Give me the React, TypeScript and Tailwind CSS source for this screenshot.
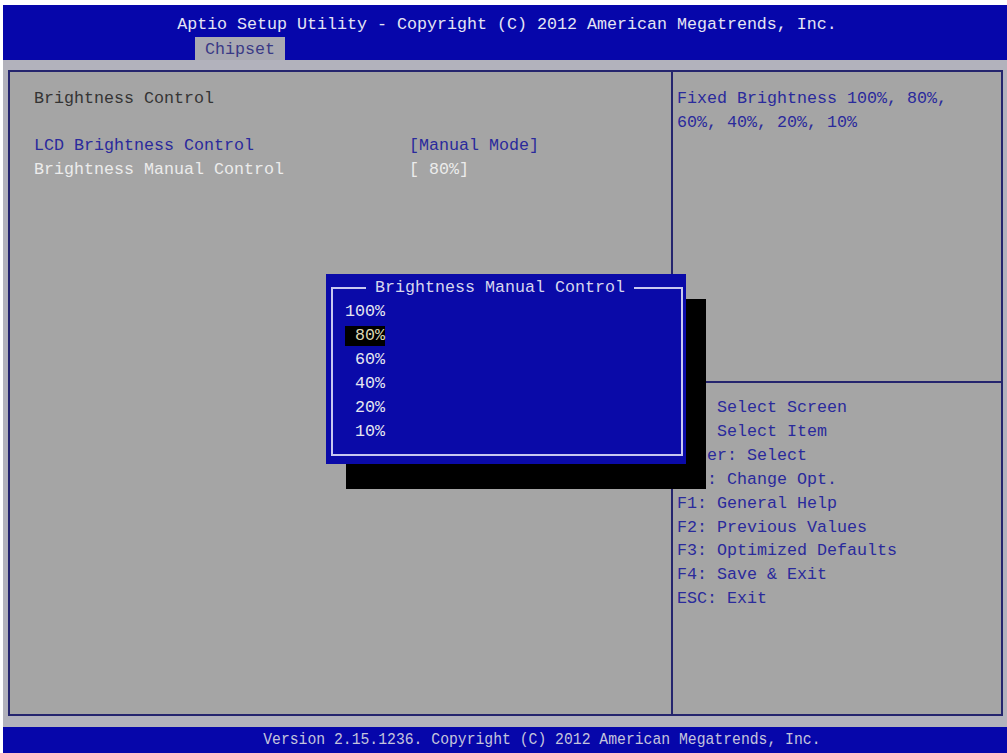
import React from 'react'

const MONO = { fontFamily: '"Liberation Mono", "DejaVu Sans Mono", monospace' }

const HELP_KEYS = [
  '→←: Select Screen',
  '↑↓: Select Item',
  'Enter: Select',
  '+/-: Change Opt.',
  'F1: General Help',
  'F2: Previous Values',
  'F3: Optimized Defaults',
  'F4: Save & Exit',
  'ESC: Exit',
]

const OPTIONS = ['100%', ' 80%', ' 60%', ' 40%', ' 20%', ' 10%']

// ── popup over the setup page ──────────────────────────
function OptionPopup() {
  return (
    <div className="absolute left-[326px] top-[274px] w-[360px] h-[190px] bg-[#0a0aa8] shadow-[20px_25px_0_0_#000]">
      <div className="absolute left-[5px] right-[3px] top-[13px] bottom-[8px] border-2 border-[#c8c8f0]" />
      <div className="absolute left-0 right-0 top-[2px] flex justify-center">
        <span className="bg-[#0a0aa8] px-[9px] ml-[-12px] leading-[24px] text-[#d6d6ee]">Brightness Manual Control</span>
      </div>
      <div className="absolute left-[19px] top-[26px] flex flex-col">
        {OPTIONS.map(o =>
          o === ' 80%' ? (
            <span key={o} className="whitespace-pre w-[40px] leading-[20px] my-[2px] bg-black text-[#dcd8b4]">{o}</span>
          ) : (
            <span key={o} className="whitespace-pre w-[40px] leading-[24px] text-[#e6e6f0]">{o}</span>
          )
        )}
      </div>
    </div>
  )
}

export default function App() {
  return (
    <div className="relative w-[1007px] h-[753px] bg-white pt-[5px] pl-[3px] flex flex-col text-[16.67px]" style={MONO}>
      {/* header */}
      <div className="h-[55px] bg-[#0606aa] flex flex-col shrink-0">
        <div className="h-[32px] pt-[8px] flex items-center justify-center text-[#e4e4f4] leading-none pl-[4px]">
          Aptio Setup Utility - Copyright (C) 2012 American Megatrends, Inc.
        </div>
        <div className="mt-auto ml-[192px] w-[90px] h-[23px] pt-[3px] bg-[#a9a9b2] flex items-center justify-center text-[#3a3a86] leading-none">
          Chipset
        </div>
      </div>

      {/* body */}
      <div className="flex-1 bg-[#b2b2bc] pt-[10px] pb-[11px] pl-[5px] pr-[4px] flex">
        <div className="flex-1 border-2 border-[#25256e] bg-[#a5a5a5] flex">
          <div className="w-[661px] pl-[24px] pt-[15px] leading-[24px]">
            <div className="text-[#343434]">Brightness Control</div>
            <div className="h-[23px]" />
            <div className="flex text-[#2a2a9c]">
              <span className="w-[375px]">LCD Brightness Control</span>
              <span>[Manual Mode]</span>
            </div>
            <div className="flex text-[#ececec] whitespace-pre">
              <span className="w-[375px]">Brightness Manual Control</span>
              <span>[ 80%]</span>
            </div>
          </div>
          <div className="flex-1 border-l-2 border-[#25256e] flex flex-col">
            <div className="h-[309px] pl-[4px] pt-[15px] leading-[24px] text-[#2a2a9c]">
              <div>Fixed Brightness 100%, 80%,</div>
              <div>60%, 40%, 20%, 10%</div>
            </div>
            <div className="border-t-2 border-[#25256e] pl-[4px] pt-[13px] leading-[23.9px] text-[#2a2a9c]">
              {HELP_KEYS.map(k => (
                <div key={k}>{k}</div>
              ))}
            </div>
          </div>
        </div>
      </div>

      {/* footer */}
      <div className="h-[26px] bg-[#0606aa] flex items-center justify-center pl-[73px] shrink-0 overflow-hidden">
        <span className="inline-block scale-x-[0.885] text-[#c4c4dc] leading-none">
          Version 2.15.1236. Copyright (C) 2012 American Megatrends, Inc.
        </span>
      </div>

      <OptionPopup />
    </div>
  )
}
